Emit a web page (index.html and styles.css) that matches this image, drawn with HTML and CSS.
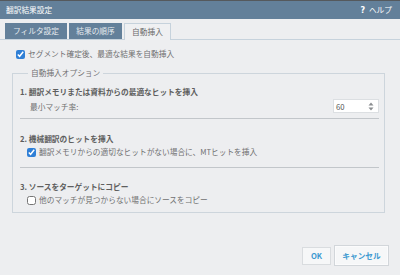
FILE: index.html
```html
<!DOCTYPE html>
<html lang="ja">
<head>
<meta charset="utf-8">
<link rel="stylesheet" href="styles.css">
</head>
<body>
<div class="dialog">
  <div class="topline"></div>
  <div class="titlebar">
    <span class="title">翻訳結果設定</span>
    <span class="help"><b class="q">?</b> ヘルプ</span>
  </div>
  <div class="tabs">
    <div class="tab t1">フィルタ設定</div>
    <div class="tab t2">結果の順序</div>
    <div class="tab t3 active">自動挿入</div>
  </div>
  <div class="content">
    <label class="check top-check"><input type="checkbox" checked><span>セグメント確定後、最適な結果を自動挿入</span></label>
    <fieldset class="options">
      <legend>自動挿入オプション</legend>
      <div class="heading h1">1. 翻訳メモリまたは資料からの最適なヒットを挿入</div>
      <div class="match-row">
        <span>最小マッチ率:</span>
        <div class="spin">
          <span>60</span>
          <svg width="6" height="9" viewBox="0 0 6 9"><path d="M3 0.5 L5.5 3.6 H0.5 Z M3 8.5 L5.5 5.4 H0.5 Z" fill="#8a8d90"/></svg>
        </div>
      </div>
      <div class="sep s1"></div>
      <div class="heading h2">2. 機械翻訳のヒットを挿入</div>
      <label class="check sub"><input type="checkbox" checked><span>翻訳メモリからの適切なヒットがない場合に、MTヒットを挿入</span></label>
      <div class="sep s2"></div>
      <div class="heading h3">3. ソースをターゲットにコピー</div>
      <label class="check sub"><input type="checkbox"><span>他のマッチが見つからない場合にソースをコピー</span></label>
    </fieldset>
  </div>
  <div class="footer">
    <button class="btn ok">OK</button>
    <button class="btn cancel">キャンセル</button>
  </div>
</div>
</body>
</html>
```
FILE: styles.css
```css
* { box-sizing: border-box; }
html, body {
  margin: 0;
  padding: 0;
  width: 400px;
  height: 275px;
  overflow: hidden;
  background: #edeef0;
  font-family: "Noto Sans CJK JP", "Noto Sans", sans-serif;
  font-size: 7.7px;
  color: #707070;
}
.dialog { width: 400px; height: 275px; display: flex; flex-direction: column; }
.topline { height: 1px; background: #55595d; }
.titlebar {
  height: 18px;
  background: #63809a;
  color: #ffffff;
  display: flex;
  align-items: center;
  justify-content: space-between;
  padding: 0 8px 0 6px;
  line-height: 10px;
}
.help .q { font-weight: bold; font-family: "DejaVu Sans", sans-serif; font-size: 8px; margin-right: 2px; }
.tabs {
  margin-top: 4px;
  padding-left: 5px;
  display: flex;
  gap: 2px;
  height: 17px;
  border-bottom: 1px solid #c6d2dc;
}
.tab {
  height: 16px;
  line-height: 16px;
  text-align: center;
  background: #63809a;
  color: #e6ebef;
}
.t1 { width: 62px; }
.t2 { width: 53px; }
.t3 { width: 47px; }
.tab.active {
  height: 17px;
  background: #eff0f2;
  color: #6a6a6a;
  border: 1px solid #c6d2dc;
  border-bottom: none;
  line-height: 15px;
}
.content { padding: 0 15px 0 12px; }
.check { display: flex; align-items: center; gap: 3px; height: 10px; line-height: 10px; }
.check input {
  width: 9px;
  height: 9px;
  margin: 0;
  accent-color: #2f7fd6;
}
.top-check { margin-top: 9px; padding-left: 4px; }
.options {
  margin: 9px 0 0 0;
  border: 1px solid #cdd5dc;
  padding: 9px 5px 7px 7px;
  min-width: 0;
}
.options legend {
  padding: 0 3px;
  margin-left: 8px;
  line-height: 10px;
  color: #707070;
}
.heading { font-weight: bold; color: #5e5e5e; line-height: 10px; height: 10px; }
.match-row {
  margin-top: 2px;
  padding-left: 10px;
  height: 14px;
  display: flex;
  align-items: center;
  justify-content: space-between;
}
.spin {
  width: 46px;
  height: 14px;
  background: #ffffff;
  border: 1px solid #dcdfe2;
  display: flex;
  align-items: center;
  justify-content: space-between;
  padding: 0 4px 0 2px;
  color: #555;
}
.spin svg { display: block; }
.sep { height: 1px; background: #c2c6ca; }
.s1 { margin-top: 5px; }
.h2 { margin-top: 15px; }
.sub { margin-top: 3px; padding-left: 7px; gap: 3px; }
.s2 { margin-top: 10px; }
.h3 { margin-top: 14px; }
.footer {
  margin-top: auto;
  margin-bottom: 9px;
  display: flex;
  justify-content: flex-end;
  align-items: center;
  gap: 3px;
  padding-right: 11px;
}
.btn {
  font-family: "Noto Sans CJK JP", "Noto Sans", sans-serif;
  font-size: 7.7px;
  font-weight: bold;
  color: #3d9ad1;
  background: #f6f7f8;
  border: 1px solid #d9dcdf;
  padding: 0;
  line-height: 10px;
}
.ok { width: 29px; height: 18px; }
.cancel { width: 55px; height: 21px; box-shadow: inset 0 0 0 1px #fbfbfc; border-color: #d2d6da; }
```
